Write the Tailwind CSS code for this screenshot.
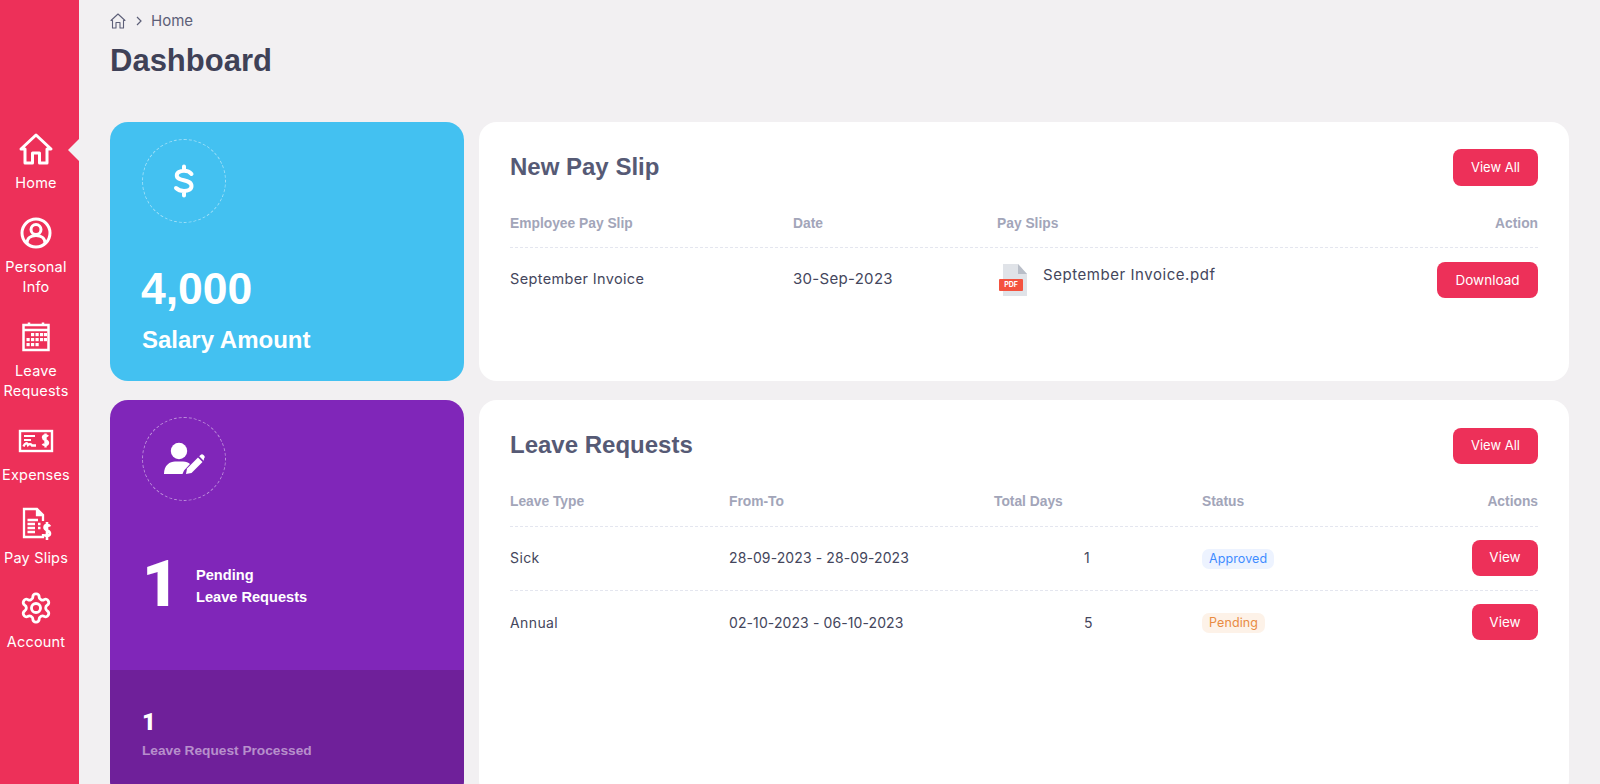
<!DOCTYPE html>
<html lang="en">
  <head>
    <meta charset="UTF-8" />
    <meta name="viewport" content="width=device-width, initial-scale=1.0" />
    <title>Dashboard</title>
    <script src="https://cdn.jsdelivr.net/npm/@tailwindcss/browser@4"></script>
  </head>
  <body class="bg-[#f2f0f2] font-['Inter',sans-serif] text-[#44465c]">
    <div class="flex h-[784px] w-[1600px] overflow-hidden">
      <!-- Sidebar -->
      <aside class="relative w-[79px] shrink-0 bg-[#ed3059] pr-[7px] pt-[132px] text-white">
        <div class="absolute right-0 top-[139px] h-0 w-0 border-y-[11px] border-r-[11px] border-y-transparent border-r-[#f2f0f2]"></div>
        <nav class="flex flex-col items-center text-center text-[14.5px] leading-[20.5px] tracking-[0.2px]">
          <a class="flex w-full flex-col items-center pb-[22px]">
            <svg class="mb-[7px] h-[34px] w-[36px]" viewBox="0 0 36 34" fill="none" stroke="white" stroke-width="3" stroke-linejoin="round">
              <path d="M18 3 L33 17 H29 V31 H21.5 V21 H14.5 V31 H7 V17 H3 Z" />
            </svg>
            <span>Home</span>
          </a>
          <a class="flex w-full flex-col items-center pb-[22px]">
            <svg class="mb-[7px] h-[34px] w-[36px]" viewBox="0 0 36 34" fill="none" stroke="white" stroke-width="3">
              <circle cx="18" cy="17" r="14" />
              <circle cx="18" cy="13.5" r="5" />
              <path d="M9 27 C9 22 13 19.5 18 19.5 C23 19.5 27 22 27 27" />
            </svg>
            <span>Personal<br />Info</span>
          </a>
          <a class="flex w-full flex-col items-center pb-[22px]">
            <svg class="mb-[7px] h-[34px] w-[36px]" viewBox="0 0 36 34" fill="none" stroke="white" stroke-width="2.5">
              <rect x="5.5" y="5" width="25" height="25" />
              <path d="M5.5 10 H30.5 M11 2.5 V6 M25 2.5 V6" />
              <g fill="white" stroke="none">
                <rect x="13" y="13" width="3.2" height="3.2" /><rect x="17.5" y="13" width="3.2" height="3.2" /><rect x="22" y="13" width="3.2" height="3.2" /><rect x="26" y="13" width="3" height="3.2" />
                <rect x="8.5" y="18" width="3.2" height="3.2" /><rect x="13" y="18" width="3.2" height="3.2" /><rect x="17.5" y="18" width="3.2" height="3.2" /><rect x="22" y="18" width="3.2" height="3.2" /><rect x="26" y="18" width="3" height="3.2" />
                <rect x="8.5" y="23" width="3.2" height="3.2" /><rect x="13" y="23" width="3.2" height="3.2" /><rect x="17.5" y="23" width="3.2" height="3.2" />
              </g>
            </svg>
            <span>Leave<br />Requests</span>
          </a>
          <a class="flex w-full flex-col items-center pb-[22px]">
            <svg class="mb-[7px] h-[34px] w-[36px]" viewBox="0 0 36 34" fill="none" stroke="white" stroke-width="2.4">
              <rect x="2" y="7" width="32" height="20" />
              <path d="M6 12 H17 M6 16 H13" stroke-width="2.2" />
              <path d="M5.5 22.5 C7 18.5 9 18.5 10 21 C11.5 19.5 13 20 14 21.5 H18" stroke-width="2.4" />
              <path d="M30 12.5 C29 11 25 11 25 13.5 C25 16.5 30 15.5 30 18.8 C30 21.5 26 21.5 24.5 20 M27.5 9.5 V23.5" stroke-width="2.4" />
            </svg>
            <span>Expenses</span>
          </a>
          <a class="flex w-full flex-col items-center pb-[22px]">
            <svg class="mb-[7px] h-[34px] w-[36px]" viewBox="0 0 36 34" fill="none" stroke="white" stroke-width="2.3">
              <path d="M25 27 V30 H6 V2 H19 L25 8 V14 M19 2 V8 H25" />
              <path d="M19.5 3.5 L24 8 H19.5 Z" fill="white" stroke="none" />
              <path d="M9.5 13 H20 M9.5 17 H17 M9.5 21 H17 M9.5 25 H17 M20 17 H22.5 M20 21 H22.5" />
              <path d="M32 19.5 C31 17.5 26.5 17.5 26.5 20.5 C26.5 24 32 23 32 26.5 C32 29.5 27.5 29.5 26 27.5 M29 15 V33" stroke-width="2.6" />
            </svg>
            <span>Pay Slips</span>
          </a>
          <a class="flex w-full flex-col items-center pb-[22px]">
            <svg class="mb-[7px] h-[34px] w-[36px]" viewBox="0 0 24 24" fill="none" stroke="white" stroke-width="2">
              <path d="M12.22 2h-.44a2 2 0 0 0-2 2v.18a2 2 0 0 1-1 1.73l-.43.25a2 2 0 0 1-2 0l-.15-.08a2 2 0 0 0-2.73.73l-.22.38a2 2 0 0 0 .73 2.73l.15.1a2 2 0 0 1 1 1.72v.51a2 2 0 0 1-1 1.74l-.15.09a2 2 0 0 0-.73 2.73l.22.38a2 2 0 0 0 2.73.73l.15-.08a2 2 0 0 1 2 0l.43.25a2 2 0 0 1 1 1.73V20a2 2 0 0 0 2 2h.44a2 2 0 0 0 2-2v-.18a2 2 0 0 1 1-1.73l.43-.25a2 2 0 0 1 2 0l.15.08a2 2 0 0 0 2.73-.73l.22-.39a2 2 0 0 0-.73-2.73l-.15-.08a2 2 0 0 1-1-1.74v-.5a2 2 0 0 1 1-1.74l.15-.09a2 2 0 0 0 .73-2.73l-.22-.38a2 2 0 0 0-2.73-.73l-.15.08a2 2 0 0 1-2 0l-.43-.25a2 2 0 0 1-1-1.73V4a2 2 0 0 0-2-2z" />
              <circle cx="12" cy="12" r="3.2" />
            </svg>
            <span>Account</span>
          </a>
        </nav>
      </aside>

      <!-- Main -->
      <main class="flex-1 pl-[31px] pr-[31px]">
        <div class="flex h-[41px] items-center pt-[1px] text-[15px] text-[#5d5f78]">
          <svg class="h-[18px] w-[16px]" viewBox="0 0 16 18" fill="none" stroke="#5d5f78" stroke-width="1.1" stroke-linejoin="round">
            <path d="M8 2 L15 8.5 H13.5 V16 H10 V10.5 H6 V16 H2.5 V8.5 H1 Z" />
          </svg>
          <svg class="ml-[10px] mr-[9px] h-[10px] w-[6px]" viewBox="0 0 6 10" fill="none" stroke="#5d5f78" stroke-width="1.2">
            <path d="M1 1 L5 5 L1 9" />
          </svg>
          <span>Home</span>
        </div>
        <h1 class="font-['Liberation_Sans',sans-serif] text-[31px] font-bold leading-[40px] text-[#3f4157]">Dashboard</h1>

        <div class="mt-[41px] grid grid-cols-[354px_1090px] grid-rows-[259px_398px] gap-x-[15px] gap-y-[19px]">
          <!-- Salary -->
          <section class="rounded-[18px] bg-[#43c1f1] pl-[32px] pt-[17px] font-['Liberation_Sans',sans-serif] text-white">
            <div class="flex h-[84px] w-[84px] items-center justify-center rounded-full border border-dashed border-white/50">
              <svg class="h-[34px] w-[22px]" viewBox="0 0 22 34" fill="none" stroke="white" stroke-width="4" stroke-linecap="round" stroke-linejoin="round">
                <path d="M18.5 10 C16.5 7.5 13.5 6.8 11 6.8 C7 6.8 3.8 8.5 3.8 11.5 C3.8 18 18.5 14.5 18.5 22 C18.5 25.5 15 27 11 27 C8 27 5 26 3 24 M11 2.5 V6.8 M11 27 V31.5" />
              </svg>
            </div>
            <p class="-ml-[1px] mt-[39px] text-[44.5px] font-bold leading-[54px]">4,000</p>
            <p class="mt-[9px] text-[24px] font-bold leading-[30px]">Salary Amount</p>
          </section>

          <!-- New Pay Slip -->
          <section class="rounded-[18px] bg-white px-[31px] pt-[27px]">
            <div class="flex h-[37px] items-center justify-between">
              <h2 class="pb-[2px] font-['Liberation_Sans',sans-serif] text-[24px] font-bold text-[#565a75]">New Pay Slip</h2>
              <a class="flex h-[37px] w-[85px] items-center justify-center rounded-lg bg-[#ed3059] text-[13px] text-white">View All</a>
            </div>
            <div class="mt-[30px] grid h-[32px] grid-cols-[283px_204px_1fr_auto] border-b border-dashed border-[#e4e6ef] font-['Liberation_Sans',sans-serif] text-[13.8px] font-bold leading-[16px] text-[#a2a5b9]">
              <span>Employee Pay Slip</span>
              <span>Date</span>
              <span>Pay Slips</span>
              <span>Action</span>
            </div>
            <div class="grid grid-cols-[283px_204px_1fr_auto] items-center pt-[14px] text-[14.5px] tracking-[0.35px]">
              <span class="pb-[2px]">September Invoice</span>
              <span class="pb-[2px] text-[15px] tracking-[0.3px]">30-Sep-2023</span>
              <span class="flex items-center">
                <span class="relative ml-[4px] mr-[16px] block h-[32px] w-[26px]">
                  <svg class="h-[32px] w-[26px]" viewBox="0 0 26 32" fill="none">
                    <path d="M2 0 H17 L26 10 V32 H2 Z" fill="#e0e3e8" />
                    <path d="M17 0 L26 10 H17 Z" fill="#b9bec8" />
                  </svg>
                  <span class="absolute bottom-[5px] left-[-2px] flex h-[12px] w-[24px] items-center justify-center rounded-[1px] bg-[#f4523f] text-[7px] font-bold tracking-normal text-white">PDF</span>
                </span>
                <span class="-translate-y-[5px] text-[15px] tracking-[0.55px]">September Invoice.pdf</span>
              </span>
              <a class="flex h-[36px] w-[101px] items-center justify-center rounded-lg bg-[#ed3059] text-[13.5px] tracking-normal text-white">Download</a>
            </div>
          </section>

          <!-- Leave summary -->
          <section class="flex flex-col overflow-hidden rounded-[18px] bg-[#8026b9] font-['Liberation_Sans',sans-serif] text-white">
            <div class="h-[270px] pl-[32px] pt-[17px]">
              <div class="flex h-[84px] w-[84px] items-center justify-center rounded-full border border-dashed border-white/50">
                <svg class="h-[36px] w-[42px]" viewBox="0 0 42 36" fill="white">
                  <circle cx="16" cy="10" r="8.2" />
                  <path d="M1 33 C1 24 7 20.5 12 20.5 H20 C23 20.5 25.5 21.5 27 23 L21 29.5 L19.5 33 Z" />
                  <path d="M23 33 L24 27.5 L35 16.5 L39.5 21 L28.5 32 Z" />
                  <path d="M36.2 15.2 L37.5 14 C38.5 13 39.5 13 40.5 14 L41 14.6 C42 15.6 42 16.6 41 17.6 L40.7 19.8 Z" />
                </svg>
              </div>
              <div class="mt-[48px] flex items-center">
                <span class="w-[54px] font-['Roboto',sans-serif] text-[64px] font-black leading-[72px]">1</span>
                <p class="pt-[1px] text-[14.6px] font-bold leading-[22px]">Pending<br />Leave Requests</p>
              </div>
            </div>
            <div class="flex-1 bg-[#6f209a] pl-[32px] pt-[38px]">
              <p class="font-['Roboto',sans-serif] text-[24px] font-black leading-[28px]">1</p>
              <p class="mt-[6px] text-[13.7px] font-bold leading-[18px] text-white/50">Leave Request Processed</p>
            </div>
          </section>

          <!-- Leave Requests -->
          <section class="rounded-[18px] bg-white px-[31px] pt-[28px]">
            <div class="flex h-[36px] items-center justify-between">
              <h2 class="pb-[3px] font-['Liberation_Sans',sans-serif] text-[24px] font-bold text-[#565a75]">Leave Requests</h2>
              <a class="flex h-[36px] w-[85px] items-center justify-center rounded-lg bg-[#ed3059] text-[13px] text-white">View All</a>
            </div>
            <div class="mt-[30px] grid h-[33px] grid-cols-[219px_265px_208px_1fr_auto] border-b border-dashed border-[#e4e6ef] font-['Liberation_Sans',sans-serif] text-[13.8px] font-bold leading-[16px] text-[#a2a5b9]">
              <span>Leave Type</span>
              <span>From-To</span>
              <span>Total Days</span>
              <span>Status</span>
              <span>Actions</span>
            </div>
            <div class="grid h-[64px] grid-cols-[219px_265px_208px_1fr_auto] items-center border-b border-dashed border-[#e4e6ef] pb-[2px] text-[14px] tracking-[0.1px]">
              <span class="tracking-[0.4px]">Sick</span>
              <span>28-09-2023 - 28-09-2023</span>
              <span class="pl-[90px]">1</span>
              <span><span class="inline-block h-[20px] rounded-[7px] bg-[#edf3ff] px-[7px] text-[12.5px] leading-[20px] text-[#3f8cff]">Approved</span></span>
              <a class="flex h-[36px] w-[66px] items-center justify-center rounded-lg bg-[#ed3059] text-[13.5px] tracking-normal text-white">View</a>
            </div>
            <div class="grid h-[64px] grid-cols-[219px_265px_208px_1fr_auto] items-center pb-[2px] text-[14px] tracking-[0.1px]">
              <span class="tracking-[0.4px]">Annual</span>
              <span>02-10-2023 - 06-10-2023</span>
              <span class="pl-[90px]">5</span>
              <span><span class="inline-block h-[20px] rounded-[7px] bg-[#fdf2e8] px-[7px] text-[12.5px] leading-[20px] text-[#e98b42]">Pending</span></span>
              <a class="flex h-[36px] w-[66px] items-center justify-center rounded-lg bg-[#ed3059] text-[13.5px] tracking-normal text-white">View</a>
            </div>
          </section>
        </div>
      </main>
    </div>
  </body>
</html>
